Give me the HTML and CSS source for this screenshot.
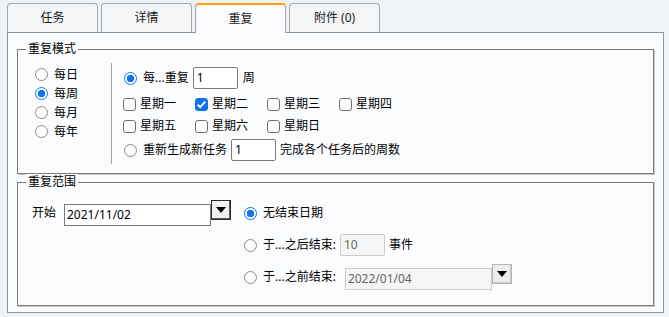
FILE: index.html
```html
<!DOCTYPE html>
<html lang="zh-CN">
<head>
    <meta charset="UTF-8">
    <title>重复</title>
    <link rel="stylesheet" href="styles.css">
</head>
<body>
<div class="tabs">
    <div class="tab">任务</div>
    <div class="tab">详情</div>
    <div class="tab active">重复</div>
    <div class="tab">附件 (0)</div>
</div>

<div class="panel">
    <fieldset class="group group--mode">
        <legend>重复模式</legend>
        <div class="mode">
            <div class="mode__list">
                <div class="opt"><span class="radio"></span>每日</div>
                <div class="opt"><span class="radio on"></span>每周</div>
                <div class="opt"><span class="radio"></span>每月</div>
                <div class="opt"><span class="radio"></span>每年</div>
            </div>
            <div class="mode__detail">
                <div class="line line--every">
                    <span class="radio on"></span>
                    <span>每...重复</span>
                    <span class="field field--small">1</span>
                    <span class="after">周</span>
                </div>
                <div class="days">
                    <div class="day"><span class="check"></span>星期一</div>
                    <div class="day"><span class="check on"><svg viewBox="0 0 13 13" width="13" height="13"><path d="M2.6 6.6 L5.2 9.2 L10.2 3.6" fill="none" stroke="#fff" stroke-width="1.8"/></svg></span>星期二</div>
                    <div class="day"><span class="check"></span>星期三</div>
                    <div class="day"><span class="check"></span>星期四</div>
                    <div class="day"><span class="check"></span>星期五</div>
                    <div class="day"><span class="check"></span>星期六</div>
                    <div class="day"><span class="check"></span>星期日</div>
                </div>
                <div class="line line--regen">
                    <span class="radio"></span>
                    <span>重新生成新任务</span>
                    <span class="field field--small">1</span>
                    <span class="after">完成各个任务后的周数</span>
                </div>
            </div>
        </div>
    </fieldset>

    <fieldset class="group group--range">
        <legend>重复范围</legend>
        <div class="range">
            <div class="range__start">
                <span class="range__label">开始</span>
                <span class="field field--date">2021/11/02</span>
                <span class="drop"></span>
            </div>
            <div class="range__end">
                <div class="line line--noend">
                    <span class="radio on"></span>
                    <span>无结束日期</span>
                </div>
                <div class="line line--after">
                    <span class="radio"></span>
                    <span>于...之后结束:</span>
                    <span class="field field--small field--off">10</span>
                    <span class="after">事件</span>
                </div>
                <div class="line line--before">
                    <span class="radio"></span>
                    <span>于...之前结束:</span>
                    <span class="field field--date field--off">2022/01/04</span>
                    <span class="drop drop--off"></span>
                </div>
            </div>
        </div>
    </fieldset>
</div>
</body>
</html>
```

FILE: styles.css
```css
body {
    margin: 0;
    background-color: #eff2f7;
    font-family: "Noto Sans", "Noto Sans CJK SC", sans-serif;
    font-size: 12px;
    line-height: 16px;
    color: #000;
}

/* tabs */
.tabs {
    display: flex;
    align-items: flex-start;
    gap: 3px;
    height: 29px;
    padding: 3px 0 0 7px;
}

.tab {
    box-sizing: border-box;
    width: 91px;
    height: 29px;
    display: flex;
    align-items: center;
    justify-content: center;
    border: 1px solid #a2a8ad;
    border-bottom: none;
    border-radius: 4px 4px 0 0;
    background-color: #f4f5f7;
    color: #1a1a1a;
}

.tab.active {
    height: 30px;
    margin-bottom: -1px;
    border-top: 2px solid #f4a300;
    background-color: #fcfcfe;
    position: relative;
    z-index: 1;
}

/* panel */
.panel {
    box-sizing: border-box;
    width: 657px;
    height: 281px;
    margin-left: 7px;
    padding: 8px 0 0 9px;
    border: 1px solid #8d959b;
    background-color: #fbfcfe;
}

.group {
    box-sizing: border-box;
    width: 637px;
    min-width: 0;
    margin: 0;
    padding: 0;
    border: 1px solid #7c7c7c;
    box-shadow: 1px 1px 0 #c6c6c6;
}

.group legend {
    margin-left: 8px;
    padding: 0 2px;
    line-height: 16px;
    background-color: #fbfcfe;
}

/* controls */
.radio {
    box-sizing: border-box;
    flex: none;
    width: 13px;
    height: 13px;
    margin-right: 6px;
    border: 1px solid #8a8a8a;
    border-radius: 50%;
    background-color: #fff;
}

.radio.on {
    border-color: #1272ec;
    background: radial-gradient(circle, #1272ec 0 3.4px, #fff 4px);
}

.check {
    box-sizing: border-box;
    flex: none;
    width: 13px;
    height: 13px;
    margin-right: 4px;
    border: 1px solid #707070;
    border-radius: 3px;
    background-color: #fff;
}

.check.on {
    border-color: #1272ec;
    background-color: #1272ec;
}

.check svg {
    display: block;
    margin: -1px;
}

.field {
    box-sizing: border-box;
    height: 22px;
    padding-left: 3px;
    display: flex;
    align-items: center;
    border: 1px solid #7a7a7a;
    border-radius: 2px;
    background-color: #fff;
}

.field--small {
    width: 45px;
    margin-left: 4px;
}

.field--date {
    width: 147px;
    border-radius: 0;
    padding-left: 2px;
}

.field--off {
    border-color: #cbcbcb;
    background-color: #f5f5f5;
    color: #666;
}

.after {
    margin-left: 5px;
}

.drop {
    box-sizing: border-box;
    width: 20px;
    height: 20px;
    display: flex;
    align-items: center;
    justify-content: center;
    border: 1px solid #2c2c2c;
    box-shadow: inset -1px -1px 0 #5a5a5a;
    background-color: #f0f0f0;
}

.drop::after {
    content: "";
    border-left: 5px solid transparent;
    border-right: 5px solid transparent;
    border-top: 6px solid #000;
}

.drop--off {
    border-color: #b4b4b4;
    box-shadow: inset -1px -1px 0 #c8c8c8;
    background-color: #ececec;
}

.line {
    display: flex;
    align-items: center;
    height: 22px;
}

/* 重复模式 */
.mode {
    display: flex;
    height: 101px;
    margin: 6px 0 9px;
}

.mode__list {
    box-sizing: border-box;
    width: 93px;
    padding: 2px 0 0 17px;
}

.opt {
    display: flex;
    align-items: center;
    height: 19px;
}

.mode__detail {
    padding-left: 12px;
    border-left: 1px solid #a3a3a3;
}

.line--every {
    margin-top: 4px;
}

.days {
    display: grid;
    grid-template-columns: repeat(4, 72px);
    grid-auto-rows: 22px;
    margin-top: 4px;
    margin-left: -1px;
}

.day {
    display: flex;
    align-items: center;
}

.line--regen {
    margin-top: 2px;
}

.line--regen .after {
    margin-left: 4px;
}

/* 重复范围 */
.range {
    display: flex;
    align-items: flex-start;
    padding: 10px 0 15px 14px;
}

.range__start {
    display: flex;
    align-items: flex-start;
}

.range__label {
    width: 24px;
    margin: 5px 8px 0 0;
}

.range__start .field {
    margin-top: 4px;
}

.range__end {
    margin: 2px 0 0 13px;
}

.line--after {
    margin-top: 10px;
}

.line--after .after {
    margin-left: 4px;
}

.line--before {
    height: 26px;
    margin-top: 8px;
}

.line--before .field {
    margin: 4px 0 0 9px;
}

.line--before .drop {
    align-self: flex-start;
}
```
